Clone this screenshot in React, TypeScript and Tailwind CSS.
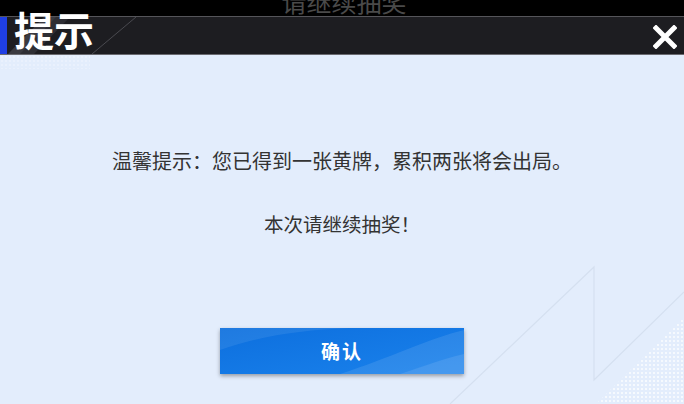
const cjk = { fontFamily: '"Noto Sans CJK SC", "Noto Sans", sans-serif' };

function CloseIcon() {
  return (
    <svg width="24" height="24" viewBox="0 0 24 24" className="block">
      <path d="M3 3 L21 21 M21 3 L3 21" stroke="#ffffff" strokeWidth="5" strokeLinecap="square" />
    </svg>
  );
}

function BodyDecor() {
  return (
    <svg className="absolute inset-0 pointer-events-none" width="684" height="349" viewBox="0 0 684 349">
      <defs>
        <pattern id="dots" width="4" height="4" patternUnits="userSpaceOnUse">
          <rect x="1" y="1" width="2" height="2" fill="#ffffff" opacity="0.8" />
        </pattern>
        <linearGradient id="fadeDots" x1="0" y1="0" x2="1" y2="1">
          <stop offset="0" stopColor="#fff" stopOpacity="0" />
          <stop offset="1" stopColor="#fff" stopOpacity="1" />
        </linearGradient>
        <mask id="dotMask">
          <rect width="684" height="349" fill="url(#fadeDots)" />
        </mask>
      </defs>
      <rect x="0" y="0" width="90" height="14" fill="url(#dots)" opacity="0.3" />
      <path d="M450 349 L594 212 L594 325 L684 237" fill="none" stroke="#d5e0f0" strokeWidth="1.2" />
      <polygon points="684,262 684,349 596,349" fill="url(#dots)" mask="url(#dotMask)" opacity="0.9" />
    </svg>
  );
}

export default function App() {
  return (
    <div className="w-[684px] h-[404px] flex flex-col overflow-hidden bg-black" style={cjk}>
      <div className="h-[16px] bg-black overflow-hidden flex justify-center">
        <span className="text-[25px] leading-[25px] -mt-[11px] text-[#4a4a4a] ml-[4px]">请继续抽奖</span>
      </div>
      <div className="relative h-[39px] bg-[#1d1d21] border-t border-t-[#55555a] border-b border-b-[#6a6a70] flex items-center">
        <svg className="absolute inset-0" width="684" height="37" viewBox="0 0 684 37">
          <polygon points="8,37 30,37 66,0 44,0" fill="#3a3a40" />
          <polygon points="20,37 34,37 70,0 56,0" fill="#2e2e34" />
          <line x1="92" y1="37" x2="136" y2="0" stroke="#4a4a50" strokeWidth="1" />
        </svg>
        <div className="w-[7px] self-stretch bg-[#1f3fe4] relative" />
        <span className="relative ml-[7px] -mt-[14px] text-[40px] leading-[40px] font-bold text-white">提示</span>
        <div className="relative ml-auto mr-[7px] mt-[2px]">
          <CloseIcon />
        </div>
      </div>
      <div className="relative flex-1 bg-[#e3edfc] flex flex-col items-center">
        <BodyDecor />
        <p className="relative pt-[94px] text-[20px] leading-[24px] text-[#333333]">
          温馨提示：您已得到一张黄牌，累积两张将会出局。
        </p>
        <p className="relative mt-[39px] text-[19.5px] leading-[24px] text-[#333333]">本次请继续抽奖！</p>
        <button className="relative mt-[92px] w-[244px] h-[46px] overflow-hidden bg-gradient-to-br from-[#0d6fde] to-[#1a82ec] shadow-[0_2px_4px_rgba(0,0,0,0.35)] flex items-center justify-center">
          <svg className="absolute inset-0" width="244" height="46" viewBox="0 0 244 46">
            <path d="M0 22 C40 8 80 2 130 0 L0 0 Z" fill="#ffffff" opacity="0.08" />
            <path d="M120 46 C170 30 210 10 244 2 L244 46 Z" fill="#ffffff" opacity="0.1" />
            <path d="M180 46 C205 38 225 30 244 26 L244 46 Z" fill="#ffffff" opacity="0.1" />
          </svg>
          <span className="relative text-[19px] font-bold text-white tracking-[2px]">确认</span>
        </button>
      </div>
    </div>
  );
}
